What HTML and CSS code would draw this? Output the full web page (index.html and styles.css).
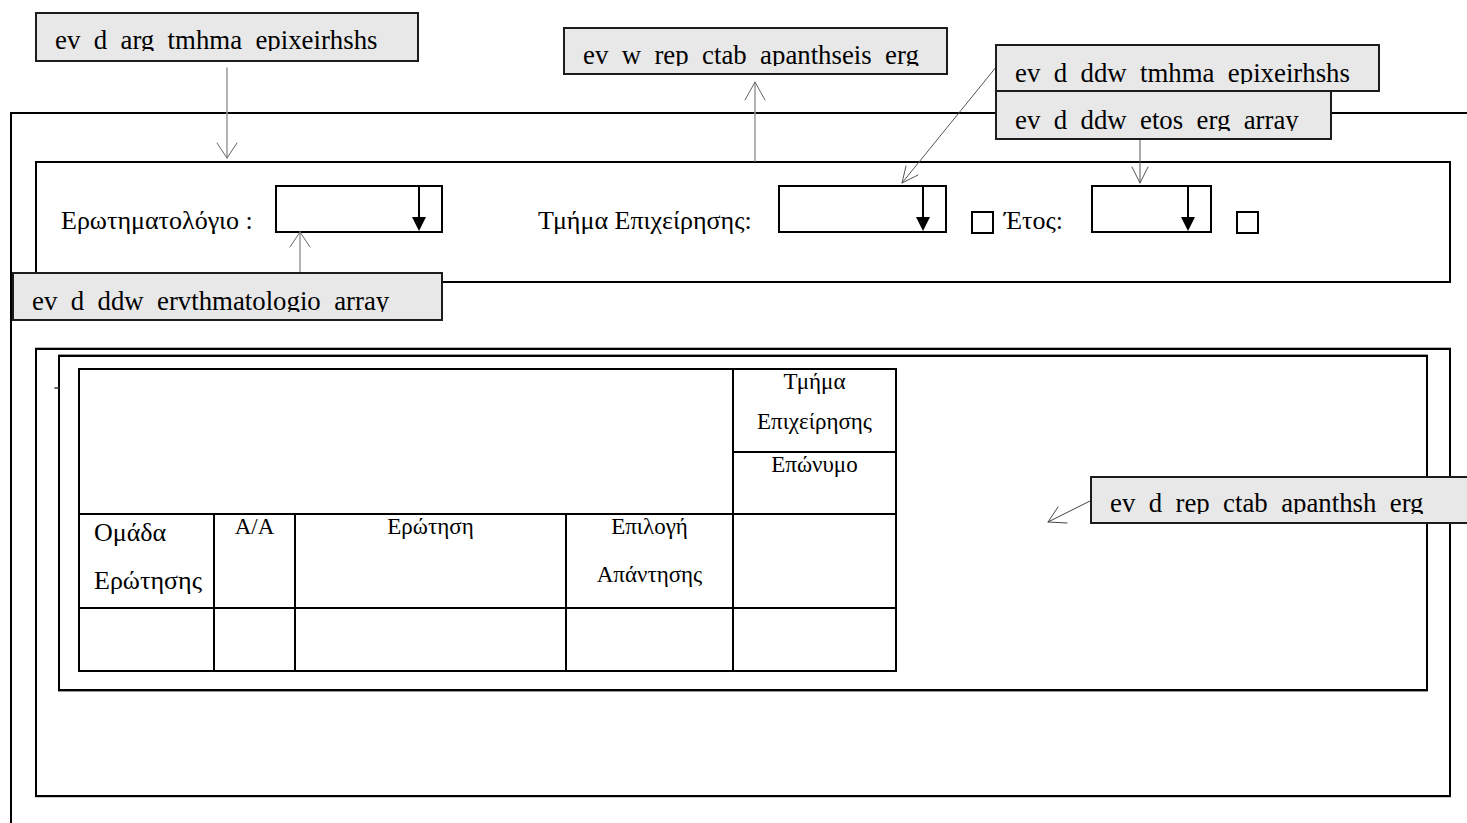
FILE: index.html
```html
<!DOCTYPE html>
<html lang="el">
<head>
<meta charset="utf-8">
<title>Φόρμα απαντήσεων</title>
<link rel="stylesheet" href="styles.css">
</head>
<body>
<div class="page">
  <div class="frame">
    <div class="filters">
      <div class="filter-row">
        <div class="lbl l1">Ερωτηματολόγιο :</div>
        <div class="dd dd1"><svg class="dd-arrow" width="16" height="44" viewBox="0 0 16 44"><line x1="8" y1="0" x2="8" y2="32" stroke="#000" stroke-width="2"/><polygon points="1,30 15,30 8,44" fill="#000"/></svg></div>
        <div class="lbl l2">Τμήμα Επιχείρησης:</div>
        <div class="dd dd2"><svg class="dd-arrow" width="16" height="44" viewBox="0 0 16 44"><line x1="8" y1="0" x2="8" y2="32" stroke="#000" stroke-width="2"/><polygon points="1,30 15,30 8,44" fill="#000"/></svg></div>
        <div class="cb cb1"></div>
        <div class="lbl l3">Έτος:</div>
        <div class="dd dd3"><svg class="dd-arrow" width="16" height="44" viewBox="0 0 16 44"><line x1="8" y1="0" x2="8" y2="32" stroke="#000" stroke-width="2"/><polygon points="1,30 15,30 8,44" fill="#000"/></svg></div>
        <div class="cb cb2"></div>
      </div>
    </div>
    <div class="report-outer">
      <div class="report">
        <div class="grid">
          <div class="c blank"></div>
          <div class="c hd two tight"><span>Τμήμα</span><span>Επιχείρησης</span></div>
          <div class="c hd">Επώνυμο</div>
          <div class="c grp two"><span>Ομάδα</span><span>Ερώτησης</span></div>
          <div class="c hd">A/A</div>
          <div class="c hd">Ερώτηση</div>
          <div class="c hd two"><span>Επιλογή</span><span>Απάντησης</span></div>
          <div class="c"></div>
          <div class="c"></div>
          <div class="c"></div>
          <div class="c"></div>
          <div class="c"></div>
          <div class="c"></div>
        </div>
      </div>
    </div>
  </div>

  <svg class="arrows" width="1467" height="823" viewBox="0 0 1467 823">
    <g fill="none" stroke-linecap="round">
      <path d="M227 68 V158" stroke="#9a9a9a" stroke-width="1.5"/>
      <path d="M217 143 L227 158 L237 143" stroke="#666" stroke-width="1"/>
      <path d="M755 161 V82" stroke="#9a9a9a" stroke-width="1.5"/>
      <path d="M745 100 L755 82 L765 100" stroke="#666" stroke-width="1"/>
      <path d="M997 66 L902 183" stroke="#555" stroke-width="1"/>
      <path d="M906 166 L902 183 L918 175" stroke="#555" stroke-width="1"/>
      <path d="M1140 140 V183" stroke="#555" stroke-width="1"/>
      <path d="M1132 167 L1140 183 L1148 167" stroke="#555" stroke-width="1"/>
      <path d="M300 272 V232" stroke="#9a9a9a" stroke-width="1.5"/>
      <path d="M290 247 L300 232 L310 247" stroke="#666" stroke-width="1"/>
      <path d="M1090 501 L1048 522" stroke="#444" stroke-width="1"/>
      <path d="M1058 507 L1048 522 L1067 523" stroke="#444" stroke-width="1"/>
      <path d="M55 388 H59" stroke="#333" stroke-width="1.5"/>
    </g>
  </svg>

  <div class="callout c-arg"><span class="ct">ev_d_arg_tmhma_epixeirhshs</span></div>
  <div class="callout c-rep"><span class="ct">ev_w_rep_ctab_apanthseis_erg</span></div>
  <div class="callout c-tmhma"><span class="ct">ev_d_ddw_tmhma_epixeirhshs</span></div>
  <div class="callout c-etos"><span class="ct">ev_d_ddw_etos_erg_array</span></div>
  <div class="callout c-erv"><span class="ct">ev_d_ddw_ervthmatologio_array</span></div>
  <div class="callout c-ans"><span class="ct">ev_d_rep_ctab_apanthsh_erg</span></div>
</div>
</body>
</html>
```

FILE: styles.css
```css
html, body {
  margin: 0;
  padding: 0;
  background: #fff;
}

body {
  font-family: "Liberation Serif", "Times New Roman", serif;
  color: #000;
}

.page {
  position: relative;
  width: 1467px;
  height: 823px;
  overflow: hidden;
}

/* outer frame: only left and top edges visible */
.frame {
  margin: 112px 0 0 10px;
  height: 711px;
  box-sizing: border-box;
  border-left: 2px solid #000;
  border-top: 2px solid #000;
}

/* filter panel */
.filters {
  margin: 47px 0 0 23px;
  width: 1416px;
  height: 122px;
  box-sizing: border-box;
  border: 2px solid #000;
}

.filter-row {
  margin-top: 22px;
  height: 48px;
  display: flex;
  align-items: flex-end;
}

.lbl {
  font-size: 26px;
  line-height: 26px;
  white-space: nowrap;
  box-sizing: border-box;
  margin-bottom: -1px;
}

.l1 { width: 238px; padding-left: 24px; }
.l2 { width: 335px; padding-left: 95px; }
.l3 { width: 97px; padding-left: 10px; }

.dd {
  height: 48px;
  box-sizing: border-box;
  border: 2px solid #000;
  display: flex;
  justify-content: flex-end;
  padding-right: 14px;
}

.dd1 { width: 168px; }
.dd2 { width: 169px; }
.dd3 { width: 121px; }

.dd-arrow { display: block; }

.cb {
  width: 23px;
  height: 23px;
  box-sizing: border-box;
  border: 2px solid #000;
  margin-left: 24px;
  margin-bottom: -1px;
}

/* report area */
.report-outer {
  margin: 65px 0 0 23px;
  width: 1416px;
  height: 449px;
  box-sizing: border-box;
  border: 2px solid #000;
  box-shadow: 0 -1px 0 #b5b5b5, 0 1px 0 #c8c8c8;
  padding: 5px 0 0 21px;
}

.report {
  width: 1370px;
  height: 336px;
  box-sizing: border-box;
  border: 2px solid #000;
  box-shadow: 0 -1px 0 #9a9a9a, 0 1px 0 #9a9a9a;
  padding: 11px 0 0 18px;
}

.grid {
  display: grid;
  grid-template-columns: 133px 79px 269px 165px 161px;
  grid-template-rows: 81px 60px 92px 61px;
  gap: 2px;
  width: 819px;
  box-sizing: border-box;
  border: 2px solid #000;
  background: #000;
}

.c {
  background: #fff;
  font-size: 23px;
  line-height: 23px;
}

.blank {
  grid-column: 1 / 5;
  grid-row: 1 / 3;
}

.hd {
  text-align: center;
  padding-top: 0;
}

.two {
  display: flex;
  flex-direction: column;
  gap: 25px;
}

.hd.two { align-items: center; }
.two.tight { gap: 17px; }

.grp {
  font-size: 26px;
  line-height: 26px;
  padding: 5px 0 0 14px;
  gap: 22px;
}

/* annotation overlay */
.arrows {
  position: absolute;
  left: 0;
  top: 0;
  pointer-events: none;
  z-index: 1;
}

.callout {
  position: absolute;
  z-index: 2;
  box-sizing: border-box;
  border: 2px solid #1c1c1c;
  background: #e8e8e8;
  padding: 12px 0 0 18px;
  white-space: nowrap;
}

.ct {
  display: block;
  height: 24px;
  overflow: hidden;
  font-size: 26.8px;
  line-height: 26.8px;
}

.c-arg   { left: 35px;   top: 12px;  width: 384px; height: 50px; padding-top: 13px; }
.c-rep   { left: 563px;  top: 27px;  width: 385px; height: 48px; padding-top: 13px; }
.c-tmhma { left: 995px;  top: 44px;  width: 385px; height: 48px; padding-top: 14px; }
.c-etos  { left: 995px;  top: 90px;  width: 337px; height: 50px; padding-top: 15px; }
.c-erv   { left: 12px;   top: 272px; width: 431px; height: 49px; padding-top: 14px; }
.c-ans   { left: 1090px; top: 476px; width: 400px; height: 48px; padding-top: 12px; }
```
